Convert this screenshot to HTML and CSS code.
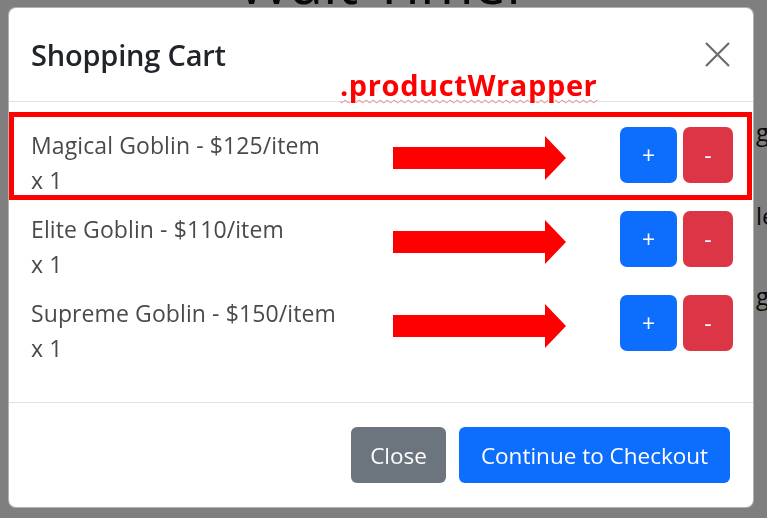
FILE: index.html
```html
<!DOCTYPE html>
<html>
<head>
<meta charset="utf-8">
<link rel="stylesheet" href="styles.css">
</head>
<body>
<div class="page">
  <h1 class="page-title">Wait Timer</h1>
  <div class="edge-line e1">go</div>
  <div class="edge-line e2">le</div>
  <div class="edge-line e3">go</div>
</div>
<div class="backdrop"></div>
<div class="modal">
  <div class="modal-header">
    <h5 class="modal-title">Shopping Cart</h5>
    <button class="btn-close" aria-label="Close">
      <svg width="25" height="25" viewBox="0 0 25 25"><path d="M1 1 L24 24 M24 1 L1 24" stroke="#6c6c6c" stroke-width="2.2" fill="none"/></svg>
    </button>
  </div>
  <div class="modal-body">
    <div class="product-row">
      <div class="product-text"><div>Magical Goblin - $125/item</div><div>x 1</div></div>
      <svg class="arrow" width="173" height="44" viewBox="0 0 173 44"><polygon points="0,11 152,11 152,0 173,22 152,44 152,33 0,33" fill="#ff0000"/></svg>
      <div class="qty-btns"><button class="btn-plus">+</button><button class="btn-minus">-</button></div>
    </div>
    <div class="product-row">
      <div class="product-text"><div>Elite Goblin - $110/item</div><div>x 1</div></div>
      <svg class="arrow" width="173" height="44" viewBox="0 0 173 44"><polygon points="0,11 152,11 152,0 173,22 152,44 152,33 0,33" fill="#ff0000"/></svg>
      <div class="qty-btns"><button class="btn-plus">+</button><button class="btn-minus">-</button></div>
    </div>
    <div class="product-row">
      <div class="product-text"><div>Supreme Goblin - $150/item</div><div>x 1</div></div>
      <svg class="arrow" width="173" height="44" viewBox="0 0 173 44"><polygon points="0,11 152,11 152,0 173,22 152,44 152,33 0,33" fill="#ff0000"/></svg>
      <div class="qty-btns"><button class="btn-plus">+</button><button class="btn-minus">-</button></div>
    </div>
  </div>
  <div class="modal-footer">
    <button class="btn btn-secondary">Close</button>
    <button class="btn btn-primary">Continue to Checkout</button>
  </div>
  <div class="annot-box"></div>
  <div class="annot-label">.productWrapper</div>
</div>
</body>
</html>
```
FILE: styles.css
```css
html, body {
  margin: 0;
  padding: 0;
  width: 767px;
  height: 518px;
  overflow: hidden;
  background: #ffffff;
  font-family: "Open Sans", "Noto Sans", sans-serif;
}

.page {
  color: #111;
  white-space: nowrap;
}

.page-title {
  margin: -47px 0 0 0;
  text-align: center;
  font-size: 58px;
  line-height: 58px;
  font-weight: 400;
  font-family: "Open Sans", sans-serif;
}

.edge-line {
  padding-left: 756px;
  font-size: 24px;
  line-height: 30px;
}

.e1 { margin-top: 106px; }
.e2 { margin-top: 54px; }
.e3 { margin-top: 50px; }

.backdrop {
  position: fixed;
  inset: 0;
  background: rgba(0, 0, 0, 0.5);
}

.modal {
  position: fixed;
  top: 7px;
  left: 8px;
  width: 746px;
  height: 501px;
  box-sizing: border-box;
  background: #fff;
  border: 1px solid rgba(0, 0, 0, 0.3);
  border-radius: 8px;
  display: flex;
  flex-direction: column;
  color: #212529;
}

.modal-header {
  box-sizing: border-box;
  height: 94px;
  padding: 0 23px 0 22px;
  border-bottom: 1px solid #dee2e6;
  display: flex;
  align-items: center;
  justify-content: space-between;
}

.modal-title {
  margin: 0;
  font-size: 29px;
  font-weight: 600;
  letter-spacing: -0.2px;
  color: #212529;
}

.btn-close {
  border: 0;
  background: transparent;
  padding: 0;
  width: 25px;
  height: 25px;
  display: flex;
}

.modal-body {
  box-sizing: border-box;
  height: 300px;
  padding: 25px 20px 0 22px;
}

.product-row {
  height: 84px;
  display: flex;
  align-items: flex-start;
}

.product-text {
  width: 362px;
  font-size: 23px;
  letter-spacing: 0.1px;
  line-height: 35px;
  color: #4a4a4a;
  margin-top: 1px;
}

.arrow {
  margin-top: 9px;
  display: block;
}

.qty-btns {
  margin-left: auto;
  display: flex;
  gap: 6px;
}

.qty-btns button {
  height: 56px;
  border: 0;
  border-radius: 7px;
  color: #fff;
  font-family: "Open Sans", sans-serif;
  font-size: 23px;
  padding: 0;
}

.btn-plus {
  width: 57px;
  background: #0d6efd;
}

.btn-minus {
  width: 50px;
  background: #dc3545;
}

.modal-footer {
  box-sizing: border-box;
  flex: 1;
  border-top: 1px solid #dee2e6;
  display: flex;
  justify-content: flex-end;
  align-items: center;
  gap: 13px;
  padding: 0 23px 0 0;
}

.btn {
  height: 56px;
  border: 0;
  border-radius: 6px;
  color: #fff;
  font-family: "Open Sans", sans-serif;
  font-size: 22.5px;
  padding: 0 8px;
}

.btn-secondary {
  width: 95px;
  background: #6c757d;
}

.btn-primary {
  width: 271px;
  background: #0d6efd;
}

.annot-box {
  position: absolute;
  left: 0;
  top: 104px;
  width: 743px;
  height: 88px;
  box-sizing: border-box;
  border: 5px solid #ff0000;
}

.annot-label {
  position: absolute;
  left: 331px;
  top: 60px;
  font-size: 29px;
  line-height: 34px;
  font-weight: 700;
  letter-spacing: 0.6px;
  color: #ff0000;
  text-decoration: underline wavy #f08080 1px;
  text-underline-offset: 3px;
}
```
